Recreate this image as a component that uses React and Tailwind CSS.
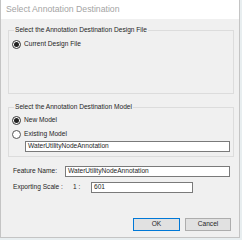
import React from "react";

const font = { fontFamily: '"Segoe UI", "Liberation Sans", Arial, sans-serif' };

function Radio({ checked, label }) {
  return (
    <div className="flex items-center h-[10px]">
      <div className={`w-[9px] h-[9px] rounded-full border flex items-center justify-center bg-white ${checked ? "border-[#333]" : "border-[#555]"}`}>
        {checked && <div className="w-[5px] h-[5px] rounded-full bg-[#222]" />}
      </div>
      <span className="ml-[3px] text-[6.6px] leading-[10px] text-[#1e1e1e]">{label}</span>
    </div>
  );
}

export default function App() {
  return (
    <div className="w-[242px] h-[240px] bg-[#e8eef0] overflow-hidden" style={font}>
      <div className="w-[240px] h-[238px] bg-[#f0f0f0] border-l border-r border-b border-[#c4c4c4] flex flex-col">
        <div className="h-[19px] bg-white flex items-center pl-[5px]">
          <span className="text-[8.7px] text-[#a4a4a4] leading-none">Select Annotation Destination</span>
        </div>
        <div className="flex flex-col pl-[7px] pr-[5px]">
          <fieldset className="mt-[7px] h-[68px] border border-[#dcdcdc] pl-[3px] pt-[5px] min-w-0">
            <legend className="ml-[2px] px-[1px] text-[6.6px] leading-[8px] text-[#1e1e1e]">Select the Annotation Destination Design File</legend>
            <Radio checked label="Current Design File" />
          </fieldset>
          <fieldset className="mt-[9px] h-[54px] border border-[#dcdcdc] pl-[3px] pt-[4px] pr-[3px] min-w-0">
            <legend className="ml-[2px] px-[1px] text-[6.6px] leading-[8px] text-[#1e1e1e]">Select the Annotation Destination Model</legend>
            <Radio checked label="New Model" />
            <div className="h-[4px]" />
            <Radio label="Existing Model" />
            <div className="mt-[2px] ml-[13px] h-[11px] bg-white border border-[#7a7a7a] flex items-center pl-[2px]">
              <span className="text-[6.6px] leading-none text-[#1e1e1e]">WaterUtilityNodeAnnotation</span>
            </div>
          </fieldset>
          <div className="mt-[9px] flex items-center h-[11px]">
            <span className="w-[57px] pl-[5px] text-[6.6px] leading-none text-[#1e1e1e]">Feature Name:</span>
            <div className="w-[165px] h-[11px] bg-white border border-[#7a7a7a] flex items-center pl-[2px]">
              <span className="text-[6.6px] leading-none text-[#1e1e1e]">WaterUtilityNodeAnnotation</span>
            </div>
          </div>
          <div className="mt-[5px] flex items-center h-[11px]">
            <span className="w-[65px] pl-[5px] text-[6.6px] leading-none text-[#1e1e1e]">Exporting Scale :</span>
            <span className="w-[18px] text-[6.6px] leading-none text-[#1e1e1e]">1 :</span>
            <div className="w-[102px] h-[11px] bg-white border border-[#7a7a7a] flex items-center pl-[2px]">
              <span className="text-[6.6px] leading-none text-[#1e1e1e]">601</span>
            </div>
          </div>
          <div className="mt-[25px] flex justify-end gap-[5px] pr-[3px]">
            <div className="w-[47px] h-[13px] bg-[#e1e1e1] border border-[#0078d7] flex items-center justify-center">
              <span className="text-[6.6px] leading-none text-[#1e1e1e]">OK</span>
            </div>
            <div className="w-[46px] h-[13px] bg-[#e1e1e1] border border-[#adadad] flex items-center justify-center">
              <span className="text-[6.6px] leading-none text-[#1e1e1e]">Cancel</span>
            </div>
          </div>
        </div>
      </div>
    </div>
  );
}
